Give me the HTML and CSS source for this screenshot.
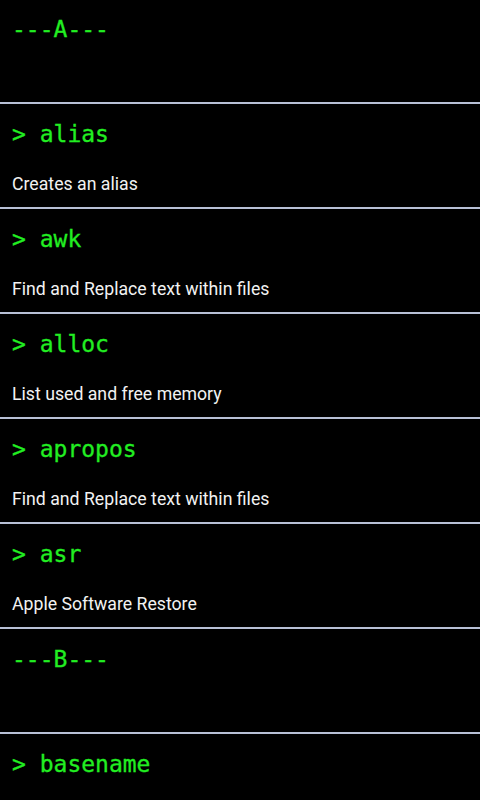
FILE: index.html
```html
<!DOCTYPE html>
<html>
<head>
<meta charset="utf-8">
<link rel="stylesheet" href="styles.css">
</head>
<body>
<ul class="list">
  <li class="row header"><div class="cmd">---A---</div></li>
  <li class="row"><div class="cmd">&gt; alias</div><div class="desc">Creates an alias</div></li>
  <li class="row"><div class="cmd">&gt; awk</div><div class="desc">Find and Replace text within files</div></li>
  <li class="row"><div class="cmd">&gt; alloc</div><div class="desc">List used and free memory</div></li>
  <li class="row"><div class="cmd">&gt; apropos</div><div class="desc">Find and Replace text within files</div></li>
  <li class="row"><div class="cmd">&gt; asr</div><div class="desc">Apple Software Restore</div></li>
  <li class="row header"><div class="cmd">---B---</div></li>
  <li class="row"><div class="cmd">&gt; basename</div></li>
</ul>
</body>
</html>
```
FILE: styles.css
```css
html, body {
  margin: 0;
  padding: 0;
  background: #000;
  width: 480px;
  height: 800px;
  overflow: hidden;
}
.list {
  list-style: none;
  margin: -1px 0 0 0;
  padding: 0;
}
.row {
  height: 103px;
  border-bottom: 2px solid #b8c0d6;
  box-sizing: content-box;
  padding: 0 12px;
  display: flex;
  flex-direction: column;
}
.cmd {
  font-family: "DejaVu Sans Mono", monospace;
  font-size: 23px;
  color: #22ee22;
  line-height: 28px;
  margin-top: 16px;
  -webkit-text-stroke: 0.3px #22ee22;
}
.desc {
  font-family: Roboto, sans-serif;
  font-size: 17.7px;
  color: #f2f2f2;
  line-height: 20px;
  margin-top: 26px;
}
```
